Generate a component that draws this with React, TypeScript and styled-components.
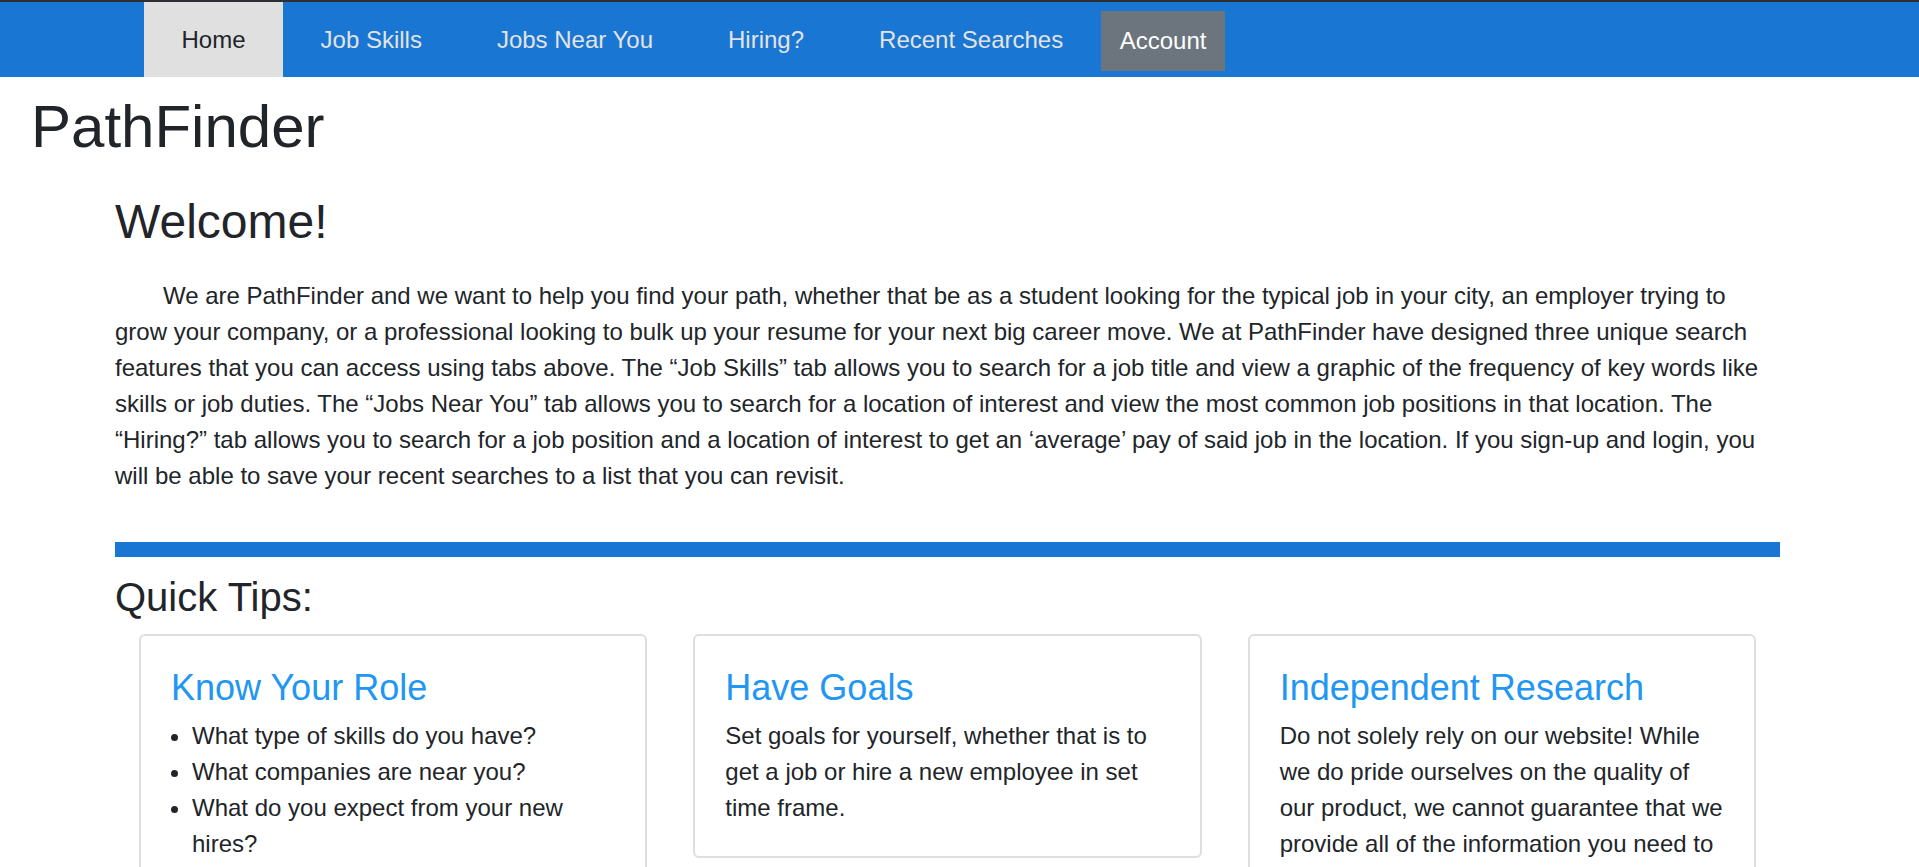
import React from "react";
import styled, { createGlobalStyle } from "styled-components";

const GlobalStyle = createGlobalStyle`
	html {
		overflow-y: scroll;
	}
	::-webkit-scrollbar {
		width: 17px;
		background-color: #f1f1f1;
	}
	::-webkit-scrollbar-thumb {
		background-color: #c1c1c1;
		border: 2px solid #f1f1f1;
	}
	::-webkit-scrollbar-button:single-button {
		height: 17px;
		background-color: #f1f1f1;
	}
	body {
		margin: 0;
		font-family: "Liberation Sans", Arial, sans-serif;
		color: #212529;
		background: #fff;
	}
`;

const NavBar = styled.nav`
	display: flex;
	height: 75px;
	padding-left: 144px;
	border-top: 2px solid #2d2f33;
	background-color: #1976d2;
`;

const NavItem = styled.a<{ $active?: boolean }>`
	display: flex;
	align-items: center;
	padding: 0 37.5px;
	font-size: 24px;
	text-decoration: none;
	cursor: pointer;
	color: ${(p) => (p.$active ? "#212529" : "#e3e3e3")};
	background-color: ${(p) => (p.$active ? "#e0e0e0" : "transparent")};
`;

const AccountButton = styled.button`
	align-self: flex-start;
	margin-top: 9px;
	height: 60px;
	padding: 0 19px;
	border: none;
	font-family: inherit;
	font-size: 24px;
	color: #fff;
	background-color: #6c757d;
	cursor: pointer;
`;

const Brand = styled.h1`
	margin: 14px 0 0 31px;
	font-size: 60px;
	line-height: 72px;
	font-weight: 400;
`;

const Main = styled.main`
	width: 1665px;
	margin-left: 115px;
	padding-bottom: 260px;
`;

const Heading = styled.h2<{ $size: number; $gap: number }>`
	margin: ${(p) => p.$gap}px 0 0;
	font-size: ${(p) => p.$size}px;
	line-height: 1.2;
	font-weight: 400;
`;

const Intro = styled.p`
	margin: 27px 0 0;
	font-size: 24px;
	line-height: 36px;
	text-indent: 48px;
`;

const Divider = styled.div`
	height: 15px;
	margin-top: 48px;
	background-color: #1976d2;
`;

const CardRow = styled.div`
	display: grid;
	grid-template-columns: repeat(3, 1fr);
	align-items: start;
	gap: 46px;
	padding: 0 24px;
	margin-top: 13px;
`;

const Card = styled.section`
	border: 2px solid #dedede;
	border-radius: 6px;
	padding: 30px;
`;

const CardTitle = styled.h3`
	margin: 0 0 9px;
	font-size: 36px;
	line-height: 1.2;
	font-weight: 400;
	color: #2196f3;
`;

const CardText = styled.p`
	margin: 0;
	font-size: 24px;
	line-height: 36px;
`;

const TipList = styled.ul`
	margin: 0;
	padding-left: 21px;
	font-size: 24px;
	line-height: 36px;
`;

const tabs = ["Home", "Job Skills", "Jobs Near You", "Hiring?", "Recent Searches"];

const App = () => {
	return (
		<>
			<GlobalStyle />
			<NavBar>
				{tabs.map((tab, i) => (
					<NavItem key={tab} $active={i === 0}>
						{tab}
					</NavItem>
				))}
				<AccountButton>Account</AccountButton>
			</NavBar>
			<Brand>PathFinder</Brand>
			<Main>
				<Heading $size={48} $gap={30}>
					Welcome!
				</Heading>
				<Intro>
					We are PathFinder and we want to help you find your path, whether that be as a
					student looking for the typical job in your city, an employer trying to grow your
					company, or a professional looking to bulk up your resume for your next big career
					move. We at PathFinder have designed three unique search features that you can access
					using tabs above. The “Job Skills” tab allows you to search for a job title and view a
					graphic of the frequency of key words like skills or job duties. The “Jobs Near You”
					tab allows you to search for a location of interest and view the most common job
					positions in that location. The “Hiring?” tab allows you to search for a job position
					and a location of interest to get an ‘average’ pay of said job in the location. If you
					sign-up and login, you will be able to save your recent searches to a list that you can
					revisit.
				</Intro>
				<Divider />
				<Heading $size={40} $gap={16}>
					Quick Tips:
				</Heading>
				<CardRow>
					<Card>
						<CardTitle>Know Your Role</CardTitle>
						<TipList>
							<li>What type of skills do you have?</li>
							<li>What companies are near you?</li>
							<li>What do you expect from your new hires?</li>
						</TipList>
					</Card>
					<Card>
						<CardTitle>Have Goals</CardTitle>
						<CardText>
							Set goals for yourself, whether that is to get a job or hire a new employee in set
							time frame.
						</CardText>
					</Card>
					<Card>
						<CardTitle>Independent Research</CardTitle>
						<CardText>
							Do not solely rely on our website! While we do pride ourselves on the quality of our
							product, we cannot guarantee that we provide all of the information you need to
							make the best decision for yourself.
						</CardText>
					</Card>
				</CardRow>
			</Main>
		</>
	);
};

export default App;
